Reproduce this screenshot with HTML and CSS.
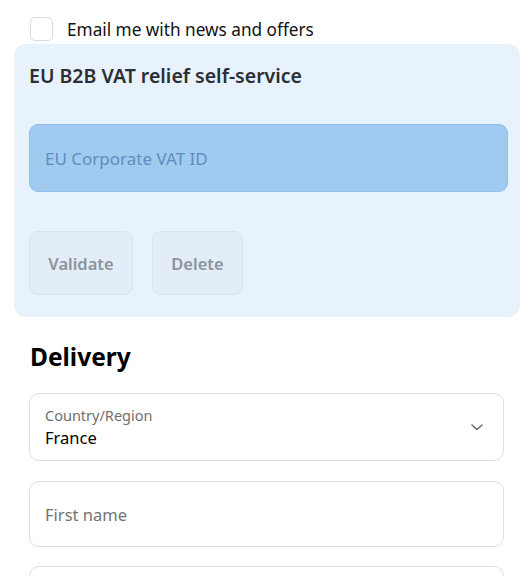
FILE: index.html
```html
<!DOCTYPE html>
<html lang="en">
<head>
<meta charset="utf-8">
<title>Checkout</title>
<link rel="stylesheet" href="styles.css">
</head>
<body>
<div class="page">
  <label class="check-row">
    <span class="checkbox"></span>
    <span class="check-label">Email me with news and offers</span>
  </label>

  <section class="vat-panel">
    <h2 class="vat-title">EU B2B VAT relief self-service</h2>
    <div class="vat-input">EU Corporate VAT ID</div>
    <div class="vat-actions">
      <button class="vat-btn">Validate</button>
      <button class="vat-btn">Delete</button>
    </div>
  </section>

  <section class="delivery">
    <h2 class="delivery-title">Delivery</h2>
    <div class="field select-field">
      <div class="select-text">
        <span class="field-label">Country/Region</span>
        <span class="field-value">France</span>
      </div>
      <svg class="chevron" width="12" height="7" viewBox="0 0 12 7"><path d="M1 1l5 4.5L11 1" fill="none" stroke="#6b6b6b" stroke-width="1.6" stroke-linecap="round" stroke-linejoin="round"/></svg>
    </div>
    <div class="field text-field"><span class="placeholder">First name</span></div>
    <div class="field text-field"></div>
  </section>
</div>
</body>
</html>
```

FILE: styles.css
```css
* { box-sizing: border-box; }
html, body { margin: 0; padding: 0; background: #ffffff; }
body {
  font-family: "Noto Sans", "Open Sans", sans-serif;
  color: #111;
  overflow: hidden;
}
.page {
  padding-top: 17px;
}
.check-row {
  display: flex;
  align-items: center;
  gap: 14px;
  padding-left: 30px;
  height: 24px;
}
.checkbox {
  width: 23px;
  height: 24px;
  border: 1px solid #dcdcdc;
  border-radius: 5px;
  background: #fff;
  flex: none;
}
.check-label {
  font-size: 17.2px;
  color: #111;
}
.vat-panel {
  margin: 3px 12px 0 14px;
  background: #e8f2fc;
  border-radius: 12px;
  padding: 18px 12px 22px 15px;
}
.vat-title {
  margin: 0;
  font-size: 19.5px;
  font-weight: 600;
  color: #2b2f33;
  line-height: 28px;
}
.vat-input {
  margin-top: 34px;
  height: 68px;
  background: #a1caf1;
  border: 1px solid #93bfea;
  border-radius: 9px;
  display: flex;
  align-items: center;
  padding-left: 15px;
  font-size: 17px;
  color: #5d8dbd;
}
.vat-actions {
  margin-top: 39px;
  display: flex;
  gap: 19px;
}
.vat-btn {
  height: 64px;
  padding: 0 18px;
  font-family: inherit;
  font-size: 16.5px;
  font-weight: 600;
  color: #8b939b;
  background: #e2edf8;
  border: 1px solid #d7e3ef;
  border-radius: 9px;
}
.vat-btn:first-child { width: 104px; }
.vat-btn:last-child { width: 91px; }
.delivery {
  padding: 0 28px 0 29px;
}
.delivery-title {
  margin: 23px 0 0 1px;
  font-size: 24.5px;
  font-weight: 700;
  line-height: 34px;
  color: #000;
}
.field {
  border: 1px solid #dedede;
  border-radius: 10px;
  background: #fff;
  display: flex;
  align-items: center;
}
.select-field {
  margin-top: 19px;
  height: 68px;
  padding: 0 20px 0 15px;
  justify-content: space-between;
}
.select-text {
  display: flex;
  flex-direction: column;
  padding-top: 1px;
}
.field-label {
  font-size: 14.5px;
  color: #707070;
  line-height: 20px;
}
.field-value {
  font-size: 16.5px;
  color: #000;
  line-height: 26px;
}
.text-field {
  margin-top: 20px;
  height: 66px;
  padding-left: 15px;
}
.text-field + .text-field { margin-top: 19px; }
.placeholder {
  font-size: 16.5px;
  color: #737373;
}
```
